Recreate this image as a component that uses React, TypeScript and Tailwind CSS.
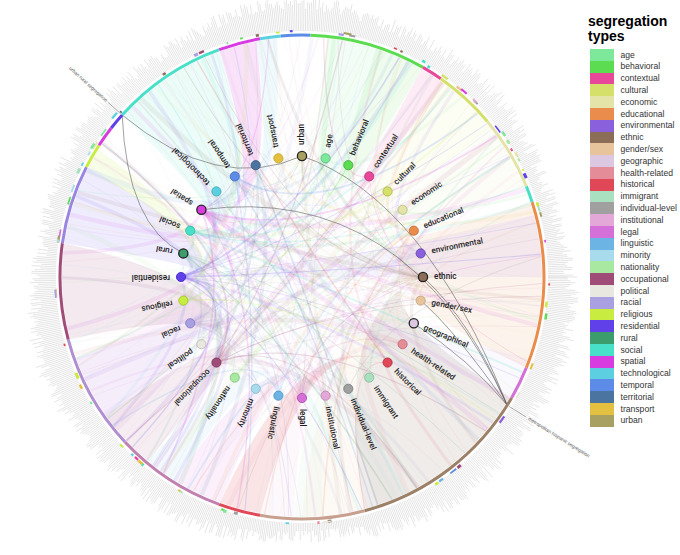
import React, { useMemo } from 'react';

const TYPES: [string, string][] = [
  ['age', '#7ee89a'],
  ['behavioral', '#5cdc50'],
  ['contextual', '#e8489a'],
  ['cultural', '#d4e06a'],
  ['economic', '#e4e4a8'],
  ['educational', '#ea8c4c'],
  ['environmental', '#8a60dc'],
  ['ethnic', '#8c6e58'],
  ['gender/sex', '#e8c49c'],
  ['geographic', '#dcc8e0'],
  ['health-related', '#e48c98'],
  ['historical', '#e04858'],
  ['immigrant', '#a8e0c0'],
  ['individual-level', '#a0a0a0'],
  ['institutional', '#e4a8d8'],
  ['legal', '#d470d8'],
  ['linguistic', '#6cb4e4'],
  ['minority', '#a8dcec'],
  ['nationality', '#a8e8a0'],
  ['occupational', '#a04c78'],
  ['political', '#e8e8e0'],
  ['racial', '#a8a0e0'],
  ['religious', '#c8ec40'],
  ['residential', '#6040e8'],
  ['rural', '#3c9c6c'],
  ['social', '#48e0c8'],
  ['spatial', '#d83ce0'],
  ['technological', '#5cd0e0'],
  ['temporal', '#5c8ce8'],
  ['territorial', '#4c74a0'],
  ['transport', '#e4c040'],
  ['urban', '#a8a060'],
];

const DARK: Record<string, string> = {
  age: '#4cbc6c', behavioral: '#3aa838', contextual: '#b82c74', cultural: '#a8b448', economic: '#b8b884',
  educational: '#c06830', environmental: '#6040b0', 'gender/sex': '#c0a078', 'health-related': '#b86874',
  historical: '#b02c3c', immigrant: '#80b898', 'individual-level': '#787878', institutional: '#b880ac',
  legal: '#a848ac', linguistic: '#4890c0', minority: '#80b4c4', nationality: '#80c078', occupational: '#7c3058',
  political: '#b8b8b0', racial: '#8078c0', religious: '#a0c020', residential: '#4020c0', social: '#28b8a0',
  technological: '#38a8b8', temporal: '#3c6cc0', territorial: '#30587c', transport: '#c0a020',
};
const HIGHLIGHT = new Set(['urban', 'spatial', 'rural', 'ethnic', 'geographic']);

const CX = 302;
const CY = 277;
const R = 242;
const NR = 121;

const rad = (d: number) => (d * Math.PI) / 180;
const pt = (r: number, d: number): [number, number] => [CX + r * Math.cos(rad(d)), CY + r * Math.sin(rad(d))];
const f = (n: number) => n.toFixed(2);

function mulberry(seed: number) {
  let s = seed;
  return () => {
    s |= 0;
    s = (s + 0x6d2b79f5) | 0;
    let t = Math.imul(s ^ (s >>> 15), 1 | s);
    t = (t + Math.imul(t ^ (t >>> 7), 61 | t)) ^ t;
    return ((t ^ (t >>> 14)) >>> 0) / 4294967296;
  };
}

const nodeAngle = (k: number) => -78.75 + 11.25 * k;
const idx = (name: string) => TYPES.findIndex((t) => t[0] === name);
const nodePos = (name: string) => pt(NR, nodeAngle(idx(name)));
const colorOf = (name: string) => TYPES[idx(name)][1];

function arc(r: number, a1: number, a2: number) {
  const [x1, y1] = pt(r, a1);
  const [x2, y2] = pt(r, a2);
  const large = a2 - a1 > 180 ? 1 : 0;
  return `M${f(x1)} ${f(y1)}A${r} ${r} 0 ${large} 1 ${f(x2)} ${f(y2)}`;
}

function ctrl(a: [number, number], b: [number, number], k: number): [number, number] {
  const mx = (a[0] + b[0]) / 2;
  const my = (a[1] + b[1]) / 2;
  return [CX + (mx - CX) * k, CY + (my - CY) * k];
}

function fanPath(name: string, a1: number, a2: number) {
  const n = nodePos(name);
  const A = pt(R - 2, a1);
  const B = pt(R - 2, a2);
  const c1 = ctrl(n, A, 0.3);
  const c2 = ctrl(n, B, 0.3);
  const large = a2 - a1 > 180 ? 1 : 0;
  return `M${f(n[0])} ${f(n[1])}Q${f(c1[0])} ${f(c1[1])} ${f(A[0])} ${f(A[1])}A${R - 2} ${R - 2} 0 ${large} 1 ${f(B[0])} ${f(B[1])}Q${f(c2[0])} ${f(c2[1])} ${f(n[0])} ${f(n[1])}Z`;
}

const RING: [number, number, string][] = [
  [165, 188, '#a04c78'],
  [188, 207, '#9a86e0'],
  [207, 213, '#c8ec40'],
  [213, 218, '#d83ce0'],
  [218, 222, '#6040e8'],
  [222, 250, '#48e0c8'],
  [250, 260, '#d83ce0'],
  [260, 265, '#5cd0e0'],
  [265, 272, '#5c8ce8'],
  [272, 300, '#5cdc50'],
  [300, 305, '#e8489a'],
  [305, 320, '#d4e06a'],
  [320, 338, '#e4e4a8'],
  [338, 342, '#48e0c8'],
  [342, 382, '#ea8c4c'],
  [382, 390, '#d470d8'],
  [390, 435, '#9c8068'],
  [435, 460, '#c8a090'],
  [460, 470, '#e04858'],
  [470, 497, '#c080b0'],
  [497, 525, '#b090d0'],
];

const FANS: [string, number, number, number][] = [
  ['social', 222, 250, 0.1],
  ['spatial', 250, 259, 0.15],
  ['technological', 259, 264, 0.1],
  ['age', 276, 290, 0.1],
  ['behavioral', 288, 300, 0.1],
  ['contextual', 300, 306, 0.1],
  ['cultural', 306, 322, 0.08],
  ['economic', 322, 338, 0.08],
  ['educational', 342, 382, 0.1],
  ['ethnic', 390, 435, 0.13],
  ['gender/sex', 435, 450, 0.09],
  ['historical', 460, 470, 0.15],
  ['legal', 470, 482, 0.1],
  ['linguistic', 482, 490, 0.08],
  ['occupational', 165, 188, 0.12],
  ['occupational', 490, 505, 0.1],
  ['residential', 188, 207, 0.1],
  ['religious', 207, 212, 0.12],
  ['racial', 505, 520, 0.08],
  ['residential', 345, 360, 0.06],
  ['individual-level', 425, 432, 0.08],
  ['institutional', 452, 460, 0.08],
  ['immigrant', 445, 452, 0.08],
  ['spatial', 140, 160, 0.06],
  ['racial', 20, 30, 0.06],
];

const WEIGHTS: Record<string, number> = {
  residential: 4, spatial: 4, racial: 4, legal: 3, occupational: 3, social: 2.5, educational: 2, ethnic: 2.5,
  linguistic: 2, temporal: 2, environmental: 2, institutional: 2, 'health-related': 1.5, nationality: 1.5,
};

function Chart() {
  const data = useMemo(() => {
    const r = mulberry(12345);
    const ticks: string[] = [];
    for (let a = 0; a < 360; a += 0.4) {
      const bump = 5 * Math.sin(rad(a * 3)) + 3 * Math.sin(rad(a * 7 + 30));
      const len = Math.max(8, 14 + r() * 14 + bump);
      const [x1, y1] = pt(R + 4, a);
      const [x2, y2] = pt(R + 4 + len, a);
      ticks.push(`M${f(x1)} ${f(y1)}L${f(x2)} ${f(y2)}`);
    }
    const bits: { d: string; c: string; w: number }[] = [];
    for (let i = 0; i < 75; i++) {
      const a = r() * 360;
      const span = 0.4 + r() * 1.6;
      const c = TYPES[Math.floor(r() * TYPES.length)][1];
      const rr = R + 3 + r() * 2.5;
      bits.push({ d: arc(rr, a, a + span), c, w: 1.5 + r() * 1.6 });
    }
    const names: string[] = [];
    TYPES.forEach(([n]) => {
      const w = WEIGHTS[n] ?? 1;
      for (let i = 0; i < w * 2; i++) names.push(n);
    });
    const lines: { d: string; c: string; w: number; o: number }[] = [];
    for (let i = 0; i < 320; i++) {
      const n = names[Math.floor(r() * names.length)];
      const p = nodePos(n);
      const a = r() * 360;
      const t = pt(R - 2, a);
      const k = 0.05 + r() * 0.6;
      const c = ctrl(p, t, k);
      const w = 0.3 + Math.pow(r(), 3) * 5;
      lines.push({
        d: `M${f(p[0])} ${f(p[1])}Q${f(c[0])} ${f(c[1])} ${f(t[0])} ${f(t[1])}`,
        c: colorOf(n),
        w,
        o: w > 2 ? 0.09 : 0.18,
      });
    }
    return { ticks, bits, lines };
  }, []);

  const U = pt(R, 222);
  const M = pt(R, 32);
  const urban = nodePos('urban');
  const rural = nodePos('rural');
  const spatial = nodePos('spatial');
  const ethnic = nodePos('ethnic');
  const geo = nodePos('geographic');
  const gender = nodePos('gender/sex');
  const q = (a: [number, number], c: [number, number], b: [number, number]) =>
    `M${f(a[0])} ${f(a[1])}Q${c[0]} ${c[1]} ${f(b[0])} ${f(b[1])}`;
  const gray = [
    q(U, [218, 194], urban),
    q(U, [127, 226], rural),
    q(M, [425, 199], urban),
    q(M, [405, 182], spatial),
    q(M, [470, 320], ethnic),
    q(M, [470, 360], geo),
    q(M, [455, 330], gender),
  ];

  const uL1 = pt(R + 2, 222);
  const uL2 = pt(R + 19, 222);
  const uT = pt(R + 21, 222);
  const mL1 = pt(R + 2, 32);
  const mL2 = pt(R + 22, 32);
  const mT = pt(R + 25, 32);

  return (
    <svg width={588} height={555} viewBox="0 0 588 555" className="block shrink-0 overflow-visible">
      <g stroke="#cbcbcb" strokeWidth={0.5}>
        {data.ticks.map((d, i) => (
          <path key={i} d={d} />
        ))}
      </g>
      <g fill="none">
        {FANS.map(([n, a1, a2, o], i) => (
          <path key={i} d={fanPath(n, a1, a2)} fill={colorOf(n)} fillOpacity={o} stroke="none" />
        ))}
      </g>
      <g fill="none" strokeLinecap="butt">
        {data.lines.map((l, i) => (
          <path key={i} d={l.d} stroke={l.c} strokeWidth={l.w} strokeOpacity={l.o} />
        ))}
      </g>
      <g fill="none" stroke="#4a4a4a" strokeWidth={0.7} strokeOpacity={0.75}>
        {gray.map((d, i) => (
          <path key={i} d={d} />
        ))}
      </g>
      <g fill="none">
        {RING.map(([a1, a2, c], i) => (
          <path key={i} d={arc(R, a1, a2)} stroke={c} strokeWidth={3} />
        ))}
        {data.bits.map((b, i) => (
          <path key={i} d={b.d} stroke={b.c} strokeWidth={b.w} />
        ))}
      </g>
      <g stroke="#666" strokeWidth={0.5}>
        <line x1={uL1[0]} y1={uL1[1]} x2={uL2[0]} y2={uL2[1]} />
        <line x1={mL1[0]} y1={mL1[1]} x2={mL2[0]} y2={mL2[1]} />
      </g>
      <text
        x={uT[0]}
        y={uT[1]}
        transform={`rotate(42 ${f(uT[0])} ${f(uT[1])})`}
        textAnchor="end"
        dominantBaseline="middle"
        fontSize={4.8}
        fill="#555"
        fontFamily="'Liberation Sans', Arial, sans-serif"
      >
        urban rural segregation
      </text>
      <text
        x={mT[0]}
        y={mT[1]}
        transform={`rotate(32 ${f(mT[0])} ${f(mT[1])})`}
        dominantBaseline="middle"
        fontSize={4.8}
        fill="#555"
        fontFamily="'Liberation Sans', Arial, sans-serif"
      >
        metropolitan hispanic segregation
      </text>
      {TYPES.map(([n, c], k) => {
        const a = nodeAngle(k);
        const [x, y] = pt(NR, a);
        const hl = HIGHLIGHT.has(n);
        return (
          <circle
            key={n}
            cx={x}
            cy={y}
            r={4.6}
            fill={c}
            stroke={hl ? '#222' : DARK[n] ?? '#666'}
            strokeWidth={hl ? 1.3 : 0.8}
          />
        );
      })}
      {TYPES.map(([n], k) => {
        const a = nodeAngle(k);
        const label = n === 'geographic' ? 'geographical' : n;
        return (
          <text
            key={n}
            x={CX + NR + 11}
            y={CY}
            transform={`rotate(${a} ${CX} ${CY})`}
            dominantBaseline="middle"
            fontSize={8.2}
            fontWeight={500}
            fill="#1e1e1e"
            fontFamily="Roboto, 'Liberation Sans', sans-serif"
          >
            {label}
          </text>
        );
      })}
    </svg>
  );
}

export default function App() {
  return (
    <div className="flex w-[680px] h-[555px] bg-white overflow-hidden">
      <Chart />
      <div className="flex flex-col pt-[14px] font-['Liberation_Sans',Arial,sans-serif]">
        <div className="text-[14px] leading-[14.5px] font-bold text-black">segregation</div>
        <div className="text-[14px] leading-[14.5px] font-bold text-black">types</div>
        <div className="mt-[6px] flex flex-col">
          {TYPES.map(([n, c]) => (
            <div key={n} className="flex items-center h-[11.8px]">
              <div className="w-[24px] h-full ml-[1.5px]" style={{ backgroundColor: c }} />
              <span className="ml-[7px] text-[8.6px] leading-none text-[#333]">{n}</span>
            </div>
          ))}
        </div>
      </div>
    </div>
  );
}
